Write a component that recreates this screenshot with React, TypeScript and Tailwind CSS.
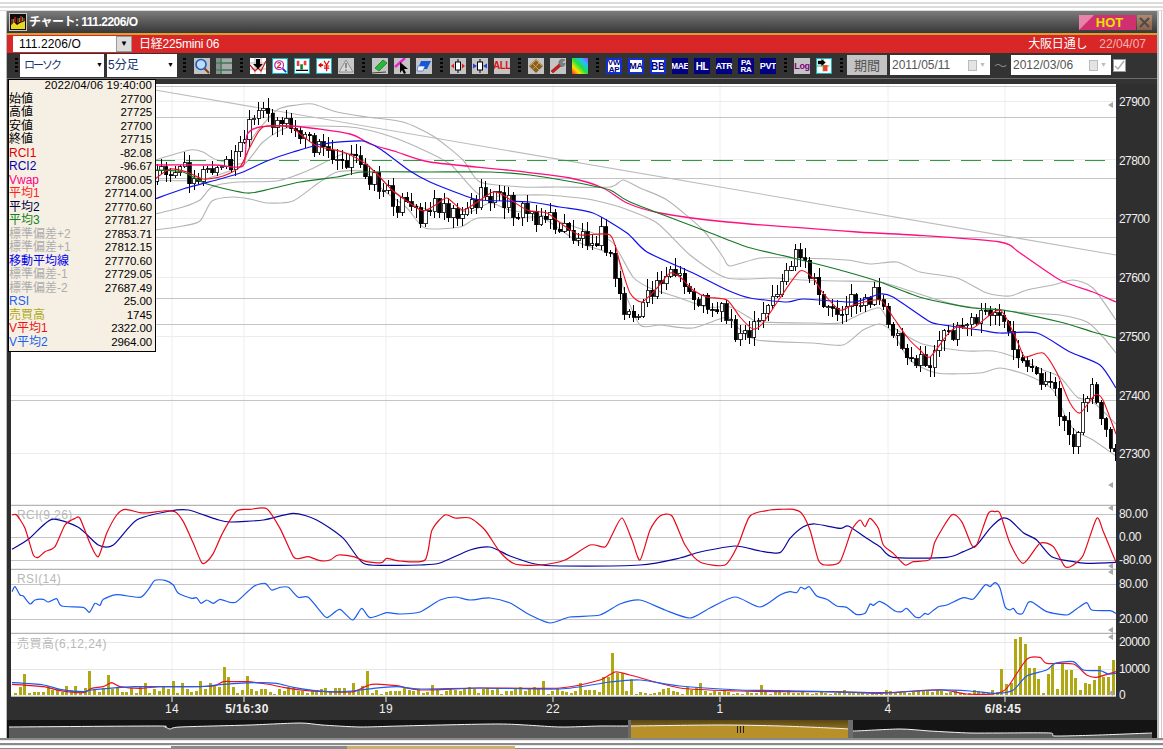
import type { ReactNode } from "react";

type Pt = [number, number];

const FONT = '"Liberation Sans", "Noto Sans CJK JP", sans-serif';

// all chart data is in page pixels so it can be read straight off the screenshot
const vwap: Pt[] = [[155,165],[215,165],[243,166],[247,135],[260,127],[293,126],[350,134],[370,144],[397,152],[430,162],[507,170],[570,178],[603,188],[627,203],[660,213],[727,222],[857,232],[913,235],[1000,242],[1020,253],[1060,280],[1093,292],[1116,302]];
const ma3: Pt[] = [[155,170],[183,172],[207,184],[247,193],[270,189],[300,182],[337,177],[363,172],[430,172],[490,172],[530,175],[573,182],[610,190],[630,202],[703,230],[747,247],[793,258],[847,272],[880,282],[923,298],[973,308],[1003,310],[1060,322],[1093,332],[1116,338]];
const ma2: Pt[] = [[155,199],[183,189],[220,179],[243,172],[267,161],[293,152],[323,144],[363,141],[383,151],[410,171],[430,182],[463,195],[480,200],[530,202],[560,207],[593,213],[627,233],[647,252],[693,273],[727,290],[750,298],[787,302],[803,299],[853,302],[880,294],[893,297],[927,320],[937,324],[980,330],[1000,333],[1037,333],[1070,352],[1100,365],[1116,388]];
const ma1: Pt[] = [[155,179],[170,169],[187,172],[203,179],[223,176],[240,167],[250,147],[263,127],[290,127],[300,134],[317,146],[343,152],[363,162],[377,174],[393,191],[407,201],[423,211],[437,204],[447,198],[463,210],[480,200],[493,192],[503,195],[527,210],[547,213],[563,225],[580,235],[610,235],[620,263],[630,293],[642,302],[657,288],[670,273],[680,277],[693,290],[707,297],[727,300],[740,317],[753,329],[763,323],[780,298],[800,271],[813,278],[823,293],[840,310],[853,305],[880,300],[893,317],[907,337],[920,350],[930,357],[947,335],[957,327],[973,328],[1000,310],[1018,343],[1025,357],[1043,353],[1057,373],[1070,403],[1080,413],[1095,395],[1103,400],[1116,434]];
const up2: Pt[] = [[155,160],[190,150],[203,152],[217,160],[243,163],[253,137],[277,110],[297,105],[313,104],[337,112],[367,117],[403,122],[433,136],[463,160],[480,182],[523,187],[557,187],[610,187],[623,180],[640,188],[667,200],[703,230],[723,257],[730,266],[760,258],[793,258],[847,260],[870,264],[897,262],[920,272],[957,278],[987,293],[1010,296],[1027,290],[1053,285],[1073,280],[1093,288],[1116,320]];
const up1: Pt[] = [[155,180],[200,180],[243,165],[263,142],[290,127],[350,127],[383,134],[417,147],[450,164],[480,195],[513,195],[547,195],[580,198],[593,200],[620,207],[657,223],[690,255],[727,278],[773,278],[803,280],[837,281],[880,282],[907,290],[957,305],[1027,313],[1060,315],[1087,322],[1103,337],[1116,353]];
const lo1: Pt[] = [[155,214],[183,207],[200,200],[212,187],[237,182],[277,181],[307,171],[343,154],[360,157],[383,181],[407,201],[430,210],[450,208],[470,212],[490,203],[510,210],[540,215],[560,222],[593,233],[613,243],[633,277],[650,288],[677,297],[707,307],[730,307],[750,318],[760,322],[813,323],[840,323],[863,313],[880,308],[893,327],[920,343],[937,347],[967,351],[993,351],[1017,358],[1043,370],[1060,377],[1077,397],[1093,402],[1116,424]];
const lo2: Pt[] = [[155,230],[183,226],[200,221],[212,201],[233,197],[250,199],[267,203],[293,201],[317,184],[337,172],[365,172],[383,190],[407,208],[425,228],[460,227],[478,218],[520,218],[543,218],[580,243],[617,257],[623,287],[640,325],[660,325],[693,328],[727,317],[737,327],[757,340],[813,343],[843,345],[863,330],[880,324],[893,333],[910,360],[937,373],[980,373],[1000,368],[1027,375],[1053,390],[1067,420],[1077,432],[1093,440],[1116,456]];

// how far the candles swing away from the red average
const swing: Pt[] = [[155,0],[250,-8],[265,-12],[290,-4],[320,0],[420,4],[600,0],[625,18],[645,12],[665,-4],[700,4],[745,12],[770,0],[797,-14],[820,2],[880,-4],[930,14],[960,-2],[1000,-2],[1030,20],[1060,15],[1075,25],[1092,-10],[1103,10],[1116,28]];

const scale = (pts: Pt[]): Pt[] => pts.map(([x, y]) => [x / 3, 500 + y / 3]);
const scaleR = (pts: Pt[]): Pt[] => pts.map(([x, y]) => [780 + x / 3, 500 + y / 3]);

const rciRed: Pt[] = [
  ...scale([[36,45],[50,45],[75,85],[100,165],[115,172],[135,155],[165,140],[195,75],[225,55],[240,55],[270,130],[295,170],[320,100],[350,45],[375,28],[420,38],[450,38],[490,33],[525,35],[550,65],[580,130],[605,188],[620,185],[640,160],[670,95],[710,33],[750,28],[800,26],[840,85],[880,170],[900,175],[925,170],[960,182],[990,180],[1015,165],[1060,170],[1100,185],[1145,188],[1160,175]]),
  [400,561],[425,560],[432,530],[445,515],[455,518],[470,518],[485,530],[500,552],[515,564],[540,565],[565,560],[590,545],[605,547],[612,535],[622,518],[632,540],[640,560],[650,530],[660,516],[672,516],[685,545],[700,562],[725,565],[738,545],[750,516],[770,510],
  ...scaleR([[0,28],[40,28],[65,40],[90,90],[115,180],[135,195],[180,185],[215,90],[240,60],[255,80],[270,55],[295,85],[310,135],[340,160],[375,195],[400,185],[450,178],[465,125],[515,45],[545,65],[575,135],[590,135],[625,40],[645,35],[660,40],[690,130],[730,190],[780,130],[820,140],[855,200],[880,195],[910,165],[950,55],[970,95],[1008,187]]),
];
const rciBlue: Pt[] = [
  ...scale([[36,148],[85,118],[155,58],[235,82],[295,135],[340,135],[410,60],[510,33],[565,30],[650,58],[690,66],[790,60],[880,40],[950,60],[1030,115],[1090,190],[1170,196]]),
  [420,565],[440,563],[470,550],[490,547],[510,556],[535,564],[560,566],[640,565],[680,558],[700,552],[735,546],[760,551],
  ...scaleR([[0,158],[30,115],[70,80],[105,72],[180,85],[205,78],[260,115],[300,140],[340,172],[500,172],[550,155],[590,135],[630,85],[665,55],[690,60],[730,98],[770,120],[815,170],[880,185],[920,190],[1008,187]]),
];
const rsi: Pt[] = [
  ...scale([[36,275],[45,260],[60,285],[70,288],[90,312],[105,300],[130,298],[145,306],[170,296],[185,318],[250,322],[268,337],[285,310],[300,316],[310,298],[350,284],[420,292],[445,268],[465,241],[495,241],[520,255],[535,280],[575,295],[590,293],[603,310],[620,300],[640,310],[660,298],[690,307],[710,305],[760,260],[795,250],[815,270],[840,262],[865,262],[895,292],[925,292],[975,350],[990,348],[1020,328],[1058,360],[1085,325],[1110,353],[1160,338]]),
  [400,614],[420,612],[440,600],[455,597],[470,600],[490,598],[510,603],[530,615],[550,623],[570,617],[600,615],[620,604],[640,600],[665,610],[690,618],[710,608],[735,597],[760,607],
  ...scaleR([[0,285],[30,275],[50,278],[62,262],[75,267],[88,260],[110,288],[140,298],[170,318],[200,322],[228,343],[255,340],[270,312],[280,316],[298,304],[320,315],[345,333],[365,335],[380,325],[405,350],[420,352],[435,340],[445,343],[475,320],[500,315],[550,293],[580,297],[615,255],[630,260],[645,248],[660,265],[675,320],[690,330],[700,325],[712,340],[728,340],[745,307],[760,308],[800,335],[860,345],[885,330],[920,308],[935,330],[990,332],[1008,340]]),
];
const volRed: Pt[] = [
  ...scale([[36,553],[130,560],[180,572],[250,578],[275,565],[310,560],[335,548],[360,560],[420,565],[480,560],[560,560],[640,558],[670,545],[700,545],[740,545],[800,552],[850,562],[920,572],[990,575],[1060,575],[1115,553],[1190,557]]),
  [420,690],[480,688],[560,688],[600,680],[615,672],[630,675],[680,688],[740,691],
  ...scaleR([[0,575],[160,575],[300,580],[400,573],[490,570],[560,582],[640,582],[680,565],[740,478],[780,472],[800,490],[880,492],[920,525],[950,532],[1008,515]]),
];
const volBlue: Pt[] = [
  ...scale([[36,548],[130,555],[180,568],[250,575],[275,570],[400,560],[600,560],[670,553],[760,548],[830,550],[880,562],[980,575],[1060,573],[1120,565],[1190,560]]),
  [420,689],[480,688],[560,689],[610,682],[640,680],[680,686],[740,690],
  ...scaleR([[0,572],[300,578],[470,570],[570,573],[650,580],[700,570],[740,528],[800,510],[825,490],[880,485],[910,510],[960,512],[985,522],[1008,520]]),
];
const navLine: Pt[] = [[9,727],[155,726],[165,727],[170,729],[180,727],[250,725],[300,723],[322,725],[360,727],[400,726],[500,724],[560,727],[600,726],[630,726],[720,725],[780,726],[830,728],[848,729],[853,731],[900,729],[930,731],[970,733],[1000,733],[1050,733],[1055,736],[1100,735],[1152,733]];

// tall bars of the volume pane, everything else is small noise
const volPeaks: Pt[] = [[24,21],[89,24],[108,20],[144,12],[173,14],[182,12],[201,14],[210,12],[224,28],[229,18],[247,19],[354,12],[368,24],[432,10],[545,14],[580,12],[606,18],[615,42],[620,22],[630,16],[700,12],[760,10],[1003,26],[1008,11],[1012,12],[1017,56],[1022,58],[1027,51],[1032,27],[1037,16],[1041,20],[1046,21],[1050,56],[1055,30],[1060,32],[1064,17],[1069,25],[1073,24],[1078,17],[1083,12],[1087,20],[1092,11],[1096,15],[1101,29],[1106,18],[1110,25],[1115,35]];

function rnd(i: number) {
  const v = Math.sin(i * 12.9898 + 4.1) * 43758.5453;
  return v - Math.floor(v);
}

function at(pts: Pt[], x: number) {
  for (let i = 1; i < pts.length; i++) {
    if (x <= pts[i][0]) {
      const [x0, y0] = pts[i - 1];
      const [x1, y1] = pts[i];
      return y0 + ((y1 - y0) * (x - x0)) / (x1 - x0 || 1);
    }
  }
  return pts[pts.length - 1][1];
}

// catmull-rom through the points, tension kept low so the peaks don't overshoot
function smooth(pts: Pt[]) {
  let d = `M${pts[0][0]} ${pts[0][1]}`;
  for (let i = 0; i < pts.length - 1; i++) {
    const p0 = pts[i - 1] || pts[i];
    const p1 = pts[i];
    const p2 = pts[i + 1];
    const p3 = pts[i + 2] || p2;
    const k = 0.12;
    d += `C${(p1[0] + (p2[0] - p0[0]) * k).toFixed(1)} ${(p1[1] + (p2[1] - p0[1]) * k).toFixed(1)} ${(p2[0] - (p3[0] - p1[0]) * k).toFixed(1)} ${(p2[1] - (p3[1] - p1[1]) * k).toFixed(1)} ${p2[0]} ${p2[1]}`;
  }
  return d;
}

function Line({ pts, color, width = 1.1 }: { pts: Pt[]; color: string; width?: number }) {
  return <path d={smooth(pts)} fill="none" stroke={color} strokeWidth={width} />;
}

function Candles() {
  const items = [];
  let prev = at(ma1, 152);
  for (let i = 0; i < 208; i++) {
    const x = 157 + i * 4.63;
    const close = at(ma1, x + 6) + at(swing, x) + (rnd(i) - 0.5) * 22;
    const top = Math.min(prev, close);
    const bottom = Math.max(prev, close);
    const wickUp = 1 + rnd(i + 300) * 10;
    const wickDown = 1 + rnd(i + 600) * 10;
    const down = close > prev;
    items.push(
      <g key={i} shapeRendering="crispEdges">
        <line x1={x} x2={x} y1={top - wickUp} y2={bottom + wickDown} stroke="#000" />
        <rect x={x - 1.7} y={top} width={3.4} height={Math.max(bottom - top, 1)} fill={down ? "#000" : "#fff"} stroke="#000" strokeWidth={0.8} />
      </g>,
    );
    prev = close;
  }
  return <>{items}</>;
}

function VolumeBars() {
  const items = [];
  for (let i = 0; i < 238; i++) {
    const x = 15.7 + i * 4.63;
    const peak = volPeaks.find(([px]) => Math.abs(px - x) < 2.4);
    const quiet = x > 700 && x < 1000;
    const h = peak ? peak[1] : 1 + rnd(i + 50) * (quiet ? 4 : 8);
    items.push(<rect key={i} x={x - 1.5} y={695 - h} width={3} height={h} fill="#b0a812" shapeRendering="crispEdges" />);
  }
  return <>{items}</>;
}

const verticals = [172, 244, 386, 553, 720, 888, 1005];

function Pane({ top, h, labels, tight = false, children }: { top: number; h: number; labels: [number, string][]; tight?: boolean; children: ReactNode }) {
  return (
    <div className="flex">
      <svg width={1105} height={h} viewBox={`11 ${top} 1105 ${h}`} className="block bg-white shrink-0">
        {verticals.map((x) => (
          <line key={x} x1={x} x2={x} y1={top} y2={top + h} stroke="#eeeeee" />
        ))}
        {children}
        <line x1={11} x2={1116} y1={top + h - 0.5} y2={top + h - 0.5} stroke="#b4b4b4" strokeWidth={1.5} />
      </svg>
      <div className={`relative flex-1 text-[12px] text-[#f0f0f0] leading-[14px] ${tight ? "tracking-[-0.6px]" : "tracking-[-0.3px]"}`}>
        {labels.map(([y, text]) => (
          <span key={text} className="absolute left-[3px] whitespace-nowrap" style={{ top: y - top - 6 }}>
            {text}
          </span>
        ))}
      </div>
    </div>
  );
}

function Hr({ y, color = "#c4c4c4", x1 = 11 }: { y: number; color?: string; x1?: number }) {
  return <line x1={x1} x2={1116} y1={y + 0.5} y2={y + 0.5} stroke={color} shapeRendering="crispEdges" />;
}

function Mark({ y }: { y: number }) {
  return <polygon points={`1108,${y} 1113,${y - 3} 1113,${y + 3}`} fill="#a8a8a8" />;
}

function Grip({ w = "w-[12px]" }: { w?: string }) {
  return (
    <div className={`${w} flex flex-col items-center gap-[2px] shrink-0`}>
      <i className="w-[3px] h-[2px] bg-[#050505]" />
      <i className="w-[3px] h-[2px] bg-[#050505]" />
      <i className="w-[3px] h-[2px] bg-[#050505]" />
      <i className="w-[3px] h-[2px] bg-[#050505]" />
    </div>
  );
}

function Tool({ children, box = "bg-[#c4c4c4]" }: { children: ReactNode; box?: string }) {
  return (
    <div className="w-[22px] flex justify-center shrink-0">
      <div className={`w-[16px] h-[16px] mt-[2px] flex items-center justify-center overflow-hidden ${box}`}>{children}</div>
    </div>
  );
}

function Glyph({ children }: { children: ReactNode }) {
  return (
    <svg width={16} height={16} viewBox="0 0 16 16" className="block">
      {children}
    </svg>
  );
}

const TEAL = "bg-white border border-[#10b8c0]";

function LabelTool({ text, size = "text-[8px]", solid = false }: { text: string[]; size?: string; solid?: boolean }) {
  return (
    <Tool box={solid ? "bg-[#000080] text-white" : "bg-white border-2 border-[#1030d0] text-[#000080]"}>
      <span className={`${size} leading-[7.5px] text-center font-bold tracking-[-0.3px]`}>
        {text.map((t) => (
          <span key={t} className="block">{t}</span>
        ))}
      </span>
    </Tool>
  );
}

function Toolbar() {
  return (
    <div className="h-[31px] bg-[#333333] shrink-0">
      <div className="h-[25.5px] flex items-center pl-[5px] border-b border-[#6e6e6e]">
        <Grip w="w-[8px]" />
        <div className="w-[84px] h-[23px] bg-white flex items-center justify-between pl-[4px] pr-[3px] text-[11px] tracking-[-2px] text-[#17306e] shrink-0">
          <span>ローソク</span>
          <span className="text-black text-[7px]">▼</span>
        </div>
        <div className="w-[70px] h-[23px] ml-[3px] bg-white flex items-center justify-between pl-[1px] pr-[3px] text-[12px] text-[#17306e] shrink-0">
          <span>5分足</span>
          <span className="text-black text-[7px]">▼</span>
        </div>
        <Grip w="w-[14px]" />
        <Tool>
          <Glyph>
            <circle cx="7" cy="6.5" r="5" fill="#bcdcf8" stroke="#1a5cc0" strokeWidth="1.6" />
            <line x1="10.5" y1="10.5" x2="15" y2="15" stroke="#8a3a10" strokeWidth="2" />
          </Glyph>
        </Tool>
        <Tool box="bg-[#8c8c8c]">
          <Glyph>
            <path d="M0 5H16M5 0V16M0 12H16" stroke="#1e7a4a" strokeWidth="1" fill="none" />
            <path d="M6 1H16V4H6ZM6 6H16V11H6ZM6 13H16V16H6Z" fill="#a8a8a8" />
          </Glyph>
        </Tool>
        <Grip />
        <Tool box="bg-white">
          <Glyph>
            <path d="M0 5H16M0 11H16M5 0V16M11 0V16" stroke="#bbbbbb" fill="none" />
            <path d="M0 7L5 13L8 10L11 13L16 3" stroke="#d01818" strokeWidth="1.2" fill="none" />
            <path d="M6 1H10V6H13L8 11L3 6H6Z" fill="#000" />
          </Glyph>
        </Tool>
        <Tool box={TEAL}>
          <Glyph>
            <circle cx="7" cy="7" r="5" fill="#fff" stroke="#c020c0" strokeWidth="1.4" />
            <text x="7" y="10.5" textAnchor="middle" fontSize="10" fill="#d01818" fontWeight="bold">2</text>
            <line x1="11" y1="11" x2="15" y2="15" stroke="#2030c0" strokeWidth="2" />
          </Glyph>
        </Tool>
        <Tool box={TEAL}>
          <Glyph>
            <path d="M2 2H5V8H2ZM10 2H13V7H10Z" fill="#e04040" />
            <path d="M6 6H9V12H6Z" fill="#108030" />
            <path d="M1 13H15" stroke="#000" strokeWidth="1.5" />
          </Glyph>
        </Tool>
        <Tool box={TEAL}>
          <Glyph>
            <path d="M1 7L5 4V6H7V8H5V10Z" fill="#e00000" />
            <path d="M8 2L11 7L14 2M11 7V14M8 8H14M8 10.5H14" stroke="#e00000" strokeWidth="1.3" fill="none" />
          </Glyph>
        </Tool>
        <Tool box="bg-[#c8c8c8]">
          <Glyph>
            <path d="M8 2L15 14H1Z" fill="#d8d8d8" stroke="#8e8e8e" />
            <path d="M8 5V10M8 11.5V13" stroke="#707070" strokeWidth="1.5" />
          </Glyph>
        </Tool>
        <Grip />
        <Tool>
          <Glyph>
            <path d="M3 10L11 2L15 5L7 13Z" fill="#28b838" stroke="#127020" strokeWidth="0.7" />
            <path d="M0 15L14 14" stroke="#404040" strokeWidth="1" />
          </Glyph>
        </Tool>
        <Tool>
          <Glyph>
            <path d="M1 9L11 0" stroke="#f020d0" strokeWidth="2.4" />
            <path d="M6 4L14 11H10L12 15L10 16L8 12L6 15Z" fill="#000" />
          </Glyph>
        </Tool>
        <Tool>
          <Glyph>
            <path d="M5 3H15L11 11H2Z" fill="#1458d8" />
            <path d="M2 8H9L7 13H1Z" fill="#f4f4f4" stroke="#1458d8" strokeWidth="0.6" />
          </Glyph>
        </Tool>
        <Grip />
        <Tool>
          <Glyph>
            <path d="M1 8L4 5.5V10.5ZM15 8L12 5.5V10.5Z" fill="#e02020" />
            <path d="M8 1V15" stroke="#000" />
            <rect x="5.5" y="4" width="5" height="8" fill="#fff" stroke="#000" />
          </Glyph>
        </Tool>
        <Tool>
          <Glyph>
            <path d="M5 8L1 5.5V10.5ZM11 8L15 5.5V10.5Z" fill="#2040e0" />
            <path d="M8 1V15" stroke="#000" />
            <rect x="5.5" y="4" width="5" height="8" fill="#fff" stroke="#000" />
          </Glyph>
        </Tool>
        <Tool>
          <span className="text-[10px] leading-none font-bold text-[#e01010] tracking-[-0.5px]">ALL</span>
        </Tool>
        <Grip />
        <Tool>
          <Glyph>
            <path d="M8 1L15 8L8 15L1 8Z" fill="#8a6020" />
            <path d="M4 5L11 12M8 2L14 8M5 11L12 4M2 8L8 2" stroke="#d8b060" strokeWidth="0.8" fill="none" />
          </Glyph>
        </Tool>
        <Tool>
          <Glyph>
            <path d="M1 13L9 6L11 8L3 15Z" fill="#d01818" stroke="#701010" strokeWidth="0.5" />
            <path d="M9 6C8 2 12 0 15 2L12 4L13 6L15 5C15 9 11 10 9 6Z" fill="#808080" stroke="#404040" strokeWidth="0.4" />
          </Glyph>
        </Tool>
        <Tool>
          <Glyph>
            <defs>
              <linearGradient id="rainbow" x1="0" y1="1" x2="1" y2="0">
                <stop offset="0" stopColor="#ff2020" />
                <stop offset="0.25" stopColor="#ffe000" />
                <stop offset="0.5" stopColor="#20e040" />
                <stop offset="0.75" stopColor="#20c0ff" />
                <stop offset="1" stopColor="#c030ff" />
              </linearGradient>
            </defs>
            <rect width="16" height="16" fill="url(#rainbow)" />
          </Glyph>
        </Tool>
        <Grip />
        <LabelTool text={["VW", "AP"]} />
        <LabelTool text={["MA"]} size="text-[9px]" />
        <LabelTool text={["BB"]} size="text-[10px]" />
        <LabelTool text={["MAE"]} size="text-[8.5px]" solid />
        <LabelTool text={["HL"]} size="text-[10px]" solid />
        <LabelTool text={["ATR"]} size="text-[9px]" solid />
        <LabelTool text={["PA", "RA"]} solid />
        <LabelTool text={["PVT"]} size="text-[9px]" solid />
        <Grip />
        <Tool>
          <span className="text-[9px] leading-none font-bold text-[#800080] tracking-[-0.3px]">Log</span>
        </Tool>
        <Tool box={TEAL}>
          <Glyph>
            <path d="M0 8H14M7 0V14" stroke="#30a050" fill="none" />
            <path d="M7 7H12V14H7Z" fill="#f04030" />
            <path d="M1 2H5V0L10 4L5 8V6H1Z" fill="#000" />
          </Glyph>
        </Tool>
        <Grip />
        <div className="w-[40px] h-[20px] bg-[#c4c4c4] text-[#555] text-[13px] flex items-center justify-center shrink-0">期間</div>
        <div className="w-[100px] h-[20px] ml-[3px] bg-white text-[#555] text-[12px] flex items-center justify-between pl-[2px] pr-[4px] shrink-0">
          <span>2011/05/11</span>
          <CalMark />
        </div>
        <div className="w-[21px] text-center text-[#888] text-[13px] shrink-0">〜</div>
        <div className="w-[100px] h-[20px] bg-white text-[#555] text-[12px] flex items-center justify-between pl-[2px] pr-[4px] shrink-0">
          <span>2012/03/06</span>
          <CalMark />
        </div>
        <div className="w-[13px] h-[13px] ml-[2px] bg-white border border-[#999] flex items-center justify-center shrink-0">
          <svg width={11} height={11} viewBox="0 0 11 11">
            <path d="M1 6L4 9L10 1" fill="none" stroke="#aaaaaa" strokeWidth="1.4" />
          </svg>
        </div>
      </div>
    </div>
  );
}

function CalMark() {
  return (
    <span className="flex items-center gap-[2px]">
      <i className="w-[9px] h-[11px] bg-[#e4e4e4] border border-[#bbb]" />
      <span className="text-[#bbb] text-[7px]">▼</span>
    </span>
  );
}

const BLACK = "text-black";
const GRAY = "text-[#adadad]";
const rows: [string, string, string][] = [
  ["始値", "27700", BLACK],
  ["高値", "27725", BLACK],
  ["安値", "27700", BLACK],
  ["終値", "27715", BLACK],
  ["RCI1", "-82.08", "text-[#e00000]"],
  ["RCI2", "-96.67", "text-[#0000a8]"],
  ["Vwap", "27800.05", "text-[#ff0080]"],
  ["平均1", "27714.00", "text-[#ff2020]"],
  ["平均2", "27770.60", "text-[#000040]"],
  ["平均3", "27781.27", "text-[#108020]"],
  ["標準偏差+2", "27853.71", GRAY],
  ["標準偏差+1", "27812.15", GRAY],
  ["移動平均線", "27770.60", "text-[#0000f0]"],
  ["標準偏差-1", "27729.05", GRAY],
  ["標準偏差-2", "27687.49", GRAY],
  ["RSI", "25.00", "text-[#2060f0]"],
  ["売買高", "1745", "text-[#b0a812]"],
  ["V平均1", "2322.00", "text-[#f01010]"],
  ["V平均2", "2964.00", "text-[#2060f0]"],
];

function InfoPanel() {
  return (
    <div className="absolute left-[1px] top-[68px] w-[148px] h-[273px] bg-[#f6f0e4] border border-black pr-[3px] text-[12px] leading-[13.5px] z-10">
      <div className="-mt-[1px] text-right text-[11.5px] tracking-[0.1px] text-black">2022/04/06 19:40:00</div>
      {rows.map(([name, value, color]) => (
        <div key={name} className="flex justify-between">
          <span className={color}>{name}</span>
          <span className="text-black text-[11.5px] tracking-[-0.1px]">{value}</span>
        </div>
      ))}
    </div>
  );
}

function TitleBar() {
  return (
    <div className="h-[22px] shrink-0 bg-gradient-to-b from-[#7c7c7c] to-[#383838] flex items-center pl-[2px] pr-[5px]">
      <svg width={18} height={18} viewBox="0 0 18 18" className="block shrink-0">
        <rect x="0.5" y="0.5" width="17" height="17" fill="#0c0c0c" stroke="#c8c8c8" />
        <path d="M2 16V12L5 9L8 12L11 10L16 8V16Z" fill="#e8d820" />
        <path d="M3 6V11M6 4V9M9 5V10M12 3V9M15 5V8" stroke="#e02020" strokeWidth="1.3" />
        <path d="M4.5 6V10M10.5 5V9M13.5 4V8" stroke="#20c040" strokeWidth="1" />
      </svg>
      <span className="ml-[2px] text-white font-bold text-[12px] tracking-[-0.5px]">チャート: 111.2206/O</span>
      <div className="ml-auto relative w-[57px] h-[15px] bg-[#d03070] flex items-center justify-center overflow-hidden">
        <i className="absolute left-0 top-0 w-0 h-0 border-t-[15px] border-r-[15px] border-t-[#e884a8] border-r-transparent" />
        <span className="relative ml-[4px] text-[#e6e400] font-bold text-[13px] leading-none">HOT</span>
      </div>
      <div className="ml-[1px] w-[15px] h-[15px] bg-gradient-to-b from-[#b08a70] to-[#8a6048] flex items-center justify-center">
        <svg width={13} height={13} viewBox="0 0 13 13">
          <path d="M2 2L11 11M11 2L2 11" stroke="#4a4a4a" strokeWidth="2" />
        </svg>
      </div>
    </div>
  );
}

function RedBar() {
  return (
    <div className="h-[18px] shrink-0 bg-[#d92626] flex items-center pl-[6px] pr-[11px]">
      <div className="w-[103px] h-[16px] bg-white text-black text-[12px] leading-[16px] pl-[6px] tracking-[0.1px]">111.2206/O</div>
      <div className="w-[16px] h-[16px] bg-[#dcdcdc] border border-[#999] text-black text-[8px] flex items-center justify-center">▼</div>
      <span className="ml-[7px] text-[#fff] text-[12px] tracking-[-0.2px]">日経225mini 06</span>
      <span className="ml-auto text-white text-[12px] tracking-[-0.2px]">大阪日通し</span>
      <span className="ml-[12px] text-[#f5b4b4] text-[12px]">22/04/07</span>
    </div>
  );
}

function TimeAxis() {
  const ticks: [number, number, string, boolean][] = [
    [172, 172, "14", false],
    [244, 247, "5/16:30", true],
    [386, 386, "19", false],
    [553, 553, "22", false],
    [720, 720, "1", false],
    [888, 888, "4", false],
    [1005, 1003, "6/8:45", true],
  ];
  return (
    <svg width={1105} height={23} viewBox="11 697 1105 23" className="block ml-[4px]">
      {ticks.map(([tick, x, text, bold]) => (
        <g key={text}>
          <line x1={tick} x2={tick} y1={697} y2={702} stroke="#e8e8e8" />
          <text x={x} y={713} textAnchor="middle" fontSize={12} letterSpacing={0.4} fill="#f0f0f0" fontWeight={bold ? "bold" : "normal"}>
            {text}
          </text>
        </g>
      ))}
    </svg>
  );
}

function Navigator() {
  const area = `${smooth(navLine)}L1152 738L9 738Z`;
  return (
    <div className="h-[18px] shrink-0 bg-[#141414]">
      <svg width={1150} height={18} viewBox="7 720 1150 18" className="block">
        <defs>
          <linearGradient id="gold" x1="0" y1="0" x2="0" y2="1">
            <stop offset="0" stopColor="#5a4614" />
            <stop offset="1" stopColor="#c49a30" />
          </linearGradient>
          <clipPath id="navClip">
            <path d={area} />
          </clipPath>
        </defs>
        <path d={area} fill="#5a5a5a" />
        <rect x={630} y={720} width={218} height={18} fill="url(#gold)" />
        <rect x={630} y={720} width={218} height={18} fill="#b8902a" clipPath="url(#navClip)" />
        <path d={smooth(navLine)} fill="none" stroke="#f4f4f4" strokeWidth={1} />
        <rect x={848} y={720} width={5} height={18} fill="#6c6c6c" />
        <rect x={628} y={720} width={3} height={18} fill="#6c6c6c" />
        <path d="M737.5 726V733M740.5 726V733M743.5 726V733" stroke="#222" strokeWidth={1} />
      </svg>
    </div>
  );
}

export default function App() {
  return (
    <div className="w-[1163px] h-[749px] overflow-hidden bg-white flex flex-col" style={{ fontFamily: FONT }}>
      <div className="h-[11px] shrink-0 bg-[repeating-linear-gradient(180deg,#ffffff_0,#ffffff_2px,#dcdcdc_2px,#dcdcdc_4px)]" />
      <div className="flex h-[727px] shrink-0">
        <div className="w-[7px] shrink-0 bg-white border-r border-[#bbbbbb]" />
        <div className="relative w-[1150px] shrink-0 flex flex-col bg-[#2f2f2f]">
          <TitleBar />
          <div className="h-[2px] shrink-0 bg-[#d8a030]" />
          <RedBar />
          <Toolbar />
          <div className="h-[613px] shrink-0 pl-[4px]">
            <Pane
              top={84}
              h={422}
              tight
              labels={[[101, "27900"], [160, "27800"], [218, "27700"], [277, "27600"], [336, "27500"], [395, "27400"], [453, "27300"]]}
            >
              {[101, 159, 218, 277, 336, 395, 453].map((y) => (
                <Hr key={y} y={y} color="#ececec" />
              ))}
              {[86, 117, 178, 237, 298, 324, 400].map((y) => (
                <Hr key={y} y={y} />
              ))}
              <line x1={155} y1={90} x2={1116} y2={255} stroke="#bcbcbc" strokeWidth={1.1} />
              {[up2, up1, lo1, lo2].map((pts, i) => (
                <Line key={i} pts={pts} color="#b4b4b4" />
              ))}
              <line x1={155} x2={1116} y1={160.5} y2={160.5} stroke="#2f9a40" strokeDasharray="20 11" />
              <Candles />
              <Line pts={vwap} color="#ff0f80" width={1.3} />
              <Line pts={ma3} color="#167a24" width={1.2} />
              <Line pts={ma2} color="#1010f0" width={1.2} />
              <Line pts={ma1} color="#f01020" width={1.1} />
              <Mark y={105} />
              <Mark y={485} />
            </Pane>
            <Pane top={506} h={64} labels={[[513, "80.00"], [536, "0.00"], [559, "-80.00"]]}>
              {[514, 537, 560].map((y) => (
                <Hr key={y} y={y} />
              ))}
              <text x={17} y={519} fontSize={12} letterSpacing={0.4} fill="#b8b8b8">RCI(9,26)</text>
              <Line pts={rciBlue} color="#0808a0" width={1.2} />
              <Line pts={rciRed} color="#e80818" width={1.2} />
              <Mark y={508} />
              <Mark y={566} />
            </Pane>
            <Pane top={570} h={64} labels={[[583, "80.00"], [618, "20.00"]]}>
              {[584, 619].map((y) => (
                <Hr key={y} y={y} />
              ))}
              <text x={17} y={583} fontSize={12} letterSpacing={0.4} fill="#b8b8b8">RSI(14)</text>
              <Line pts={rsi} color="#1c5cf0" width={1.2} />
              <Mark y={572} />
              <Mark y={630} />
            </Pane>
            <Pane top={634} h={63} tight labels={[[641, "20000"], [668, "10000"], [694, "0"]]}>
              {[642, 669].map((y) => (
                <Hr key={y} y={y} color="#e6e6e6" />
              ))}
              <text x={17} y={648} fontSize={12} letterSpacing={0.5} fill="#b8b8b8">売買高(6,12,24)</text>
              <VolumeBars />
              <Line pts={volRed} color="#ee1020" width={1.2} />
              <Line pts={volBlue} color="#1c5cf0" width={1.2} />
              <Mark y={637} />
              <Mark y={693} />
            </Pane>
          </div>
          <TimeAxis />
          <Navigator />
          <InfoPanel />
        </div>
        <div className="flex-1 bg-white border-l-2 border-[#bdbdbd] flex justify-center">
          <i className="w-px h-full bg-[#cfcfcf]" />
        </div>
      </div>
      <div className="flex-1 flex flex-col bg-[repeating-linear-gradient(180deg,#8a8a8a_0,#8a8a8a_2px,#e8e8e8_2px,#e8e8e8_3px,#ffffff_3px,#ffffff_5px)]">
        <div className="mt-auto ml-[171px] h-[3px] w-[344px] flex">
          <i className="w-[176px] bg-[#8a8a8a]" />
          <i className="flex-1 bg-[#c8b070]" />
        </div>
      </div>
    </div>
  );
}
